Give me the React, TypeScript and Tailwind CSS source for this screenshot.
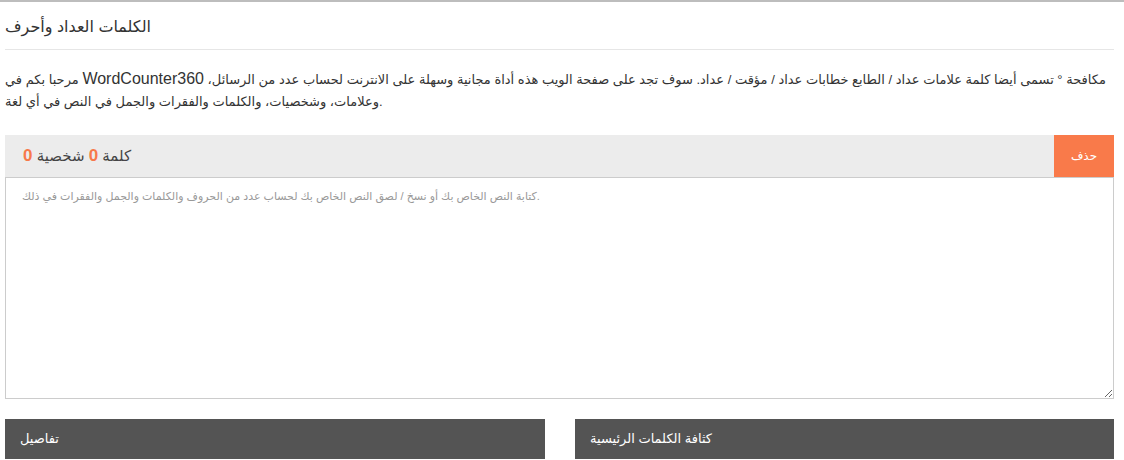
import React from "react"

const font = "font-['Liberation_Sans','DejaVu_Sans',Arial,sans-serif]"

export default function App() {
  return (
    <div className={`w-[1124px] h-[460px] overflow-hidden bg-white border-t-[2px] border-[#bdbdbd] ${font}`}>
      <div className="pl-[5px] pr-[10px]">
        <h1 className="h-[48px] pt-[3px] flex items-center border-b border-[#e6e6e6] text-[16px] font-normal text-[#333]">
          الكلمات العداد وأحرف
        </h1>

        {/* the paragraph runs a few px past the panels, as in the page */}
        <p className="mt-[19px] -mr-[6px] h-[44px] text-[13px] leading-[22px] text-[#333]">
          مرحبا بكم في <span className="text-[16px] leading-none">WordCounter360</span> مكافحة ° تسمى أيضا كلمة علامات
          عداد / الطابع خطابات عداد / مؤقت / عداد. سوف تجد على صفحة الويب هذه أداة مجانية وسهلة على الانترنت لحساب عدد
          من الرسائل، وعلامات، وشخصيات، والكلمات والفقرات والجمل في النص في أي لغة.
        </p>

        <div className="mt-[22px] flex h-[42px] bg-[#ececec]">
          <div className="flex-1 flex items-center pl-[18px] text-[15px] text-[#444]">
            <span>
              كلمة <b className="text-[#f7794a] text-[17px]">0</b> شخصية{" "}
              <b className="text-[#f7794a] text-[17px]">0</b>
            </span>
          </div>
          <button className="w-[60px] bg-[#f97a4a] text-white text-[12px]">حذف</button>
        </div>

        <textarea
          className={`block w-full h-[222px] border border-[#cccccc] px-[16px] py-[10px] text-[11px] text-[#333] placeholder:text-[#999] outline-none ${font}`}
          placeholder="كتابة النص الخاص بك أو نسخ / لصق النص الخاص بك لحساب عدد من الحروف والكلمات والجمل والفقرات في ذلك."
        />

        <div className="mt-[20px] flex gap-[30px]">
          <div className="w-[540px] h-[40px] flex items-center pl-[15px] bg-[#545454] text-white text-[13px]">
            تفاصيل
          </div>
          <div className="flex-1 h-[40px] flex items-center pl-[15px] bg-[#545454] text-white text-[13px]">
            كثافة الكلمات الرئيسية
          </div>
        </div>
      </div>
    </div>
  )
}
